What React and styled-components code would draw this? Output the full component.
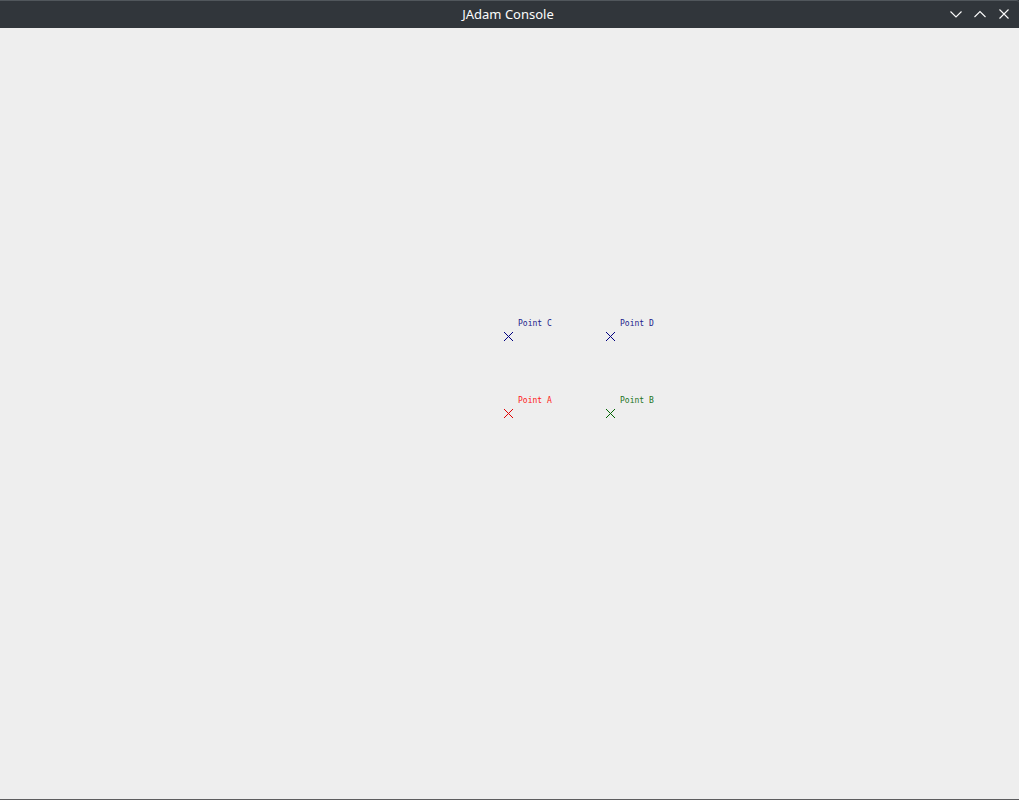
import React from "react";
import styled, { createGlobalStyle } from "styled-components";

const GlobalStyle = createGlobalStyle`
  html, body, #root { height: 100%; }
  body { margin: 0; background: #31363b; }
`;

const Window = styled.div`
  display: flex;
  flex-direction: column;
  height: 100%;
  box-sizing: border-box;
  overflow: hidden;
  border-bottom: 1px solid #5c5c5e;
`;

const TitleBar = styled.header`
  display: grid;
  grid-template-columns: 1fr auto 1fr;
  align-items: center;
  flex: none;
  height: 28px;
  box-sizing: border-box;
  padding: 0 3px 1px 0;
  border-top: 1px solid #51575c;
  border-top-right-radius: 3px;
  background: #31363b;
`;

const Title = styled.h1`
  grid-column: 2;
  margin: 0;
  color: #fcfcfc;
  font: 400 13px/20px "Noto Sans", sans-serif;
`;

const Controls = styled.div`
  display: flex;
  justify-content: flex-end;
  gap: 6px;
  padding-right: 3px;
`;

const ControlButton = styled.button`
  display: block;
  width: 18px;
  height: 18px;
  padding: 0;
  border: 0;
  background: none;
  color: #fcfcfc;
`;

const Glyph = styled.svg`
  display: block;
  fill: none;
  stroke: currentColor;
  stroke-width: 1.1;
`;

const Plot = styled.main`
  position: relative;
  flex: 1;
  background: #eeeeee;
`;

const PlotPoint = styled.div`
  position: absolute;
  left: round(down, ${(p) => p.$x}%, 1px);
  top: round(down, ${(p) => p.$y}%, 1px);
  color: ${(p) => p.$color};
`;

const Cross = styled.svg`
  position: absolute;
  left: -5px;
  top: -4px;
  fill: currentColor;
`;

const PointLabel = styled.span`
  position: absolute;
  left: 9px;
  top: -17px;
  white-space: nowrap;
  color: ${(p) => p.$color};
  font: 8px/10px "DejaVu Sans Mono", monospace;
`;

const controls = [
  { label: "Minimize", path: "M3.5 6.5 9 12l5.5-5.5" },
  { label: "Maximize", path: "M3.5 12 9 6.5l5.5 5.5" },
  { label: "Close", path: "M4.5 4.5l9 9M13.5 4.5l-9 9" },
];

const navy = { color: "#000080", labelColor: "#1c1c8c" };
const red = { color: "#e00000", labelColor: "#ff2020" };
const green = { color: "#006400", labelColor: "#1c741c" };

const points = [
  { name: "Point C", x: 50, y: 40, ...navy },
  { name: "Point D", x: 60, y: 40, ...navy },
  { name: "Point A", x: 50, y: 50, ...red },
  { name: "Point B", x: 60, y: 50, ...green },
];

const steps = [0, 1, 2, 3, 4, 5, 6, 7, 8];

function PointMark({ name, x, y, color, labelColor }) {
  return (
    <PlotPoint $x={x} $y={y} $color={color}>
      <Cross width="9" height="9" shapeRendering="crispEdges" aria-hidden="true">
        {steps.map((i) => (
          <React.Fragment key={i}>
            <rect x={i} y={i} width="1" height="1" />
            <rect x={i} y={8 - i} width="1" height="1" />
          </React.Fragment>
        ))}
      </Cross>
      <PointLabel $color={labelColor}>{name}</PointLabel>
    </PlotPoint>
  );
}

export default function App() {
  return (
    <>
      <GlobalStyle />
      <Window>
        <TitleBar>
          <Title>JAdam Console</Title>
          <Controls>
            {controls.map((c) => (
              <ControlButton key={c.label} type="button" aria-label={c.label}>
                <Glyph width="18" height="18" viewBox="0 0 18 18" aria-hidden="true">
                  <path d={c.path} />
                </Glyph>
              </ControlButton>
            ))}
          </Controls>
        </TitleBar>
        <Plot>
          {points.map((p) => (
            <PointMark key={p.name} {...p} />
          ))}
        </Plot>
      </Window>
    </>
  );
}
